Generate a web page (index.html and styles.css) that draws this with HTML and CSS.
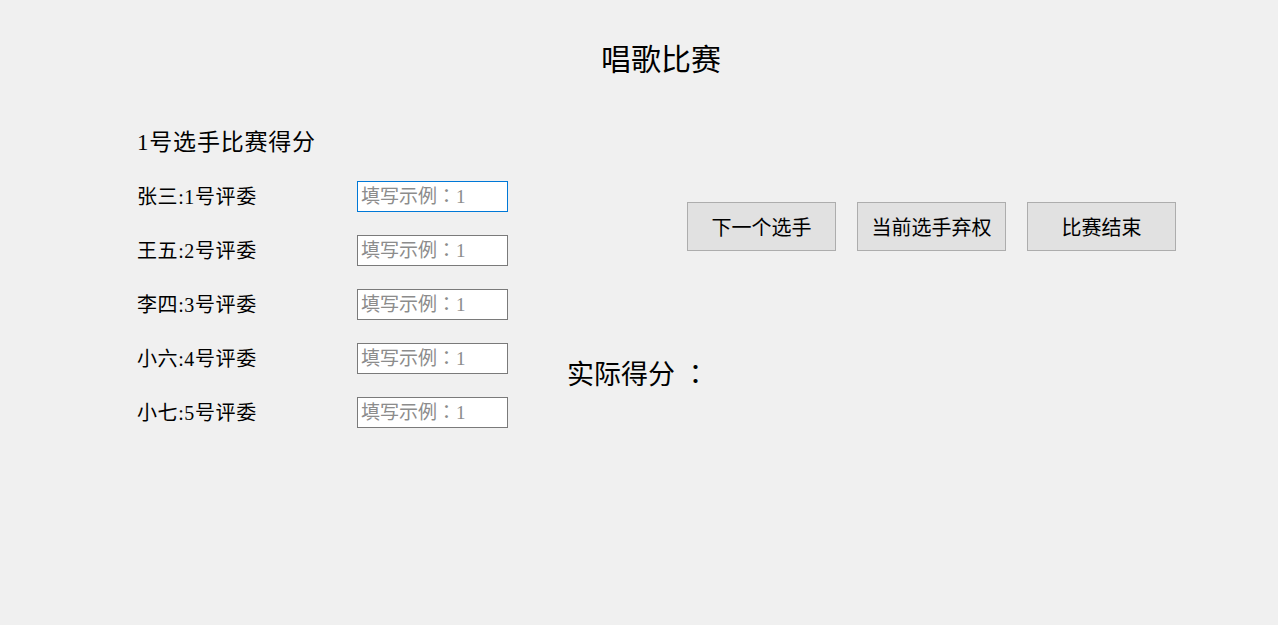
FILE: index.html
```html
<!DOCTYPE html>
<html lang="zh-CN">
<head>
    <meta charset="UTF-8">
    <title>唱歌比赛</title>
    <link rel="stylesheet" href="styles.css">
</head>
<body>
    <h1 class="title">唱歌比赛</h1>

    <div class="main">
        <div class="score-panel">
            <h2 class="player">1号选手比赛得分</h2>
            <div class="judge-row">
                <label for="j1">张三:1号评委</label>
                <input type="text" id="j1" class="focused" lang="ja" placeholder="填写示例：1">
            </div>
            <div class="judge-row">
                <label for="j2">王五:2号评委</label>
                <input type="text" id="j2" lang="ja" placeholder="填写示例：1">
            </div>
            <div class="judge-row">
                <label for="j3">李四:3号评委</label>
                <input type="text" id="j3" lang="ja" placeholder="填写示例：1">
            </div>
            <div class="judge-row">
                <label for="j4">小六:4号评委</label>
                <input type="text" id="j4" lang="ja" placeholder="填写示例：1">
            </div>
            <div class="judge-row">
                <label for="j5">小七:5号评委</label>
                <input type="text" id="j5" lang="ja" placeholder="填写示例：1">
            </div>
        </div>

        <div class="action-panel">
            <div class="buttons">
                <button type="button">下一个选手</button>
                <button type="button">当前选手弃权</button>
                <button type="button">比赛结束</button>
            </div>
            <div class="result">实际得分<span class="colon" lang="ja">：</span></div>
        </div>
    </div>
</body>
</html>
```

FILE: styles.css
```css
* {
    box-sizing: border-box;
}

body {
    margin: 0;
    padding: 44px 0 0 0;
    background-color: #f0f0f0;
    color: #000;
    font-family: "Liberation Serif", "Noto Sans CJK SC", serif;
}

.title {
    margin: 0;
    padding-left: 44px;
    text-align: center;
    font-size: 30px;
    line-height: 31px;
    font-weight: normal;
}

.main {
    display: flex;
    margin-top: 56px;
}

.score-panel {
    width: 567px;
    padding-left: 137px;
}

.player {
    margin: 0 0 26px 0;
    font-size: 23px;
    line-height: 24px;
    font-weight: normal;
    letter-spacing: 0.8px;
}

.judge-row {
    display: flex;
    align-items: center;
    margin-bottom: 23px;
}

.judge-row label {
    width: 220px;
    font-size: 20px;
    line-height: 24px;
    letter-spacing: 0.6px;
}

.judge-row input {
    width: 151px;
    height: 31px;
    padding: 0 3px;
    border: 1px solid #7a7a7a;
    background-color: #fff;
    font-family: "Liberation Serif", "Noto Sans CJK JP", serif;
    font-size: 19px;
    color: #000;
    outline: none;
}

.judge-row input::placeholder {
    color: #8c8c8c;
}

.judge-row input.focused {
    border-color: #0078d7;
}

.action-panel {
    flex: 1;
}

.buttons {
    display: flex;
    gap: 21px;
    margin: 71px 0 0 120px;
}

.buttons button {
    width: 149px;
    height: 49px;
    border: 1px solid #adadad;
    background-color: #e1e1e1;
    font-family: "Liberation Serif", "Noto Sans CJK SC", serif;
    font-size: 20px;
    color: #000;
}

.result {
    margin-top: 107px;
    font-size: 27px;
    line-height: 30px;
}

.result .colon {
    padding-left: 7px;
    font-family: "Noto Sans CJK JP", sans-serif;
}
```
